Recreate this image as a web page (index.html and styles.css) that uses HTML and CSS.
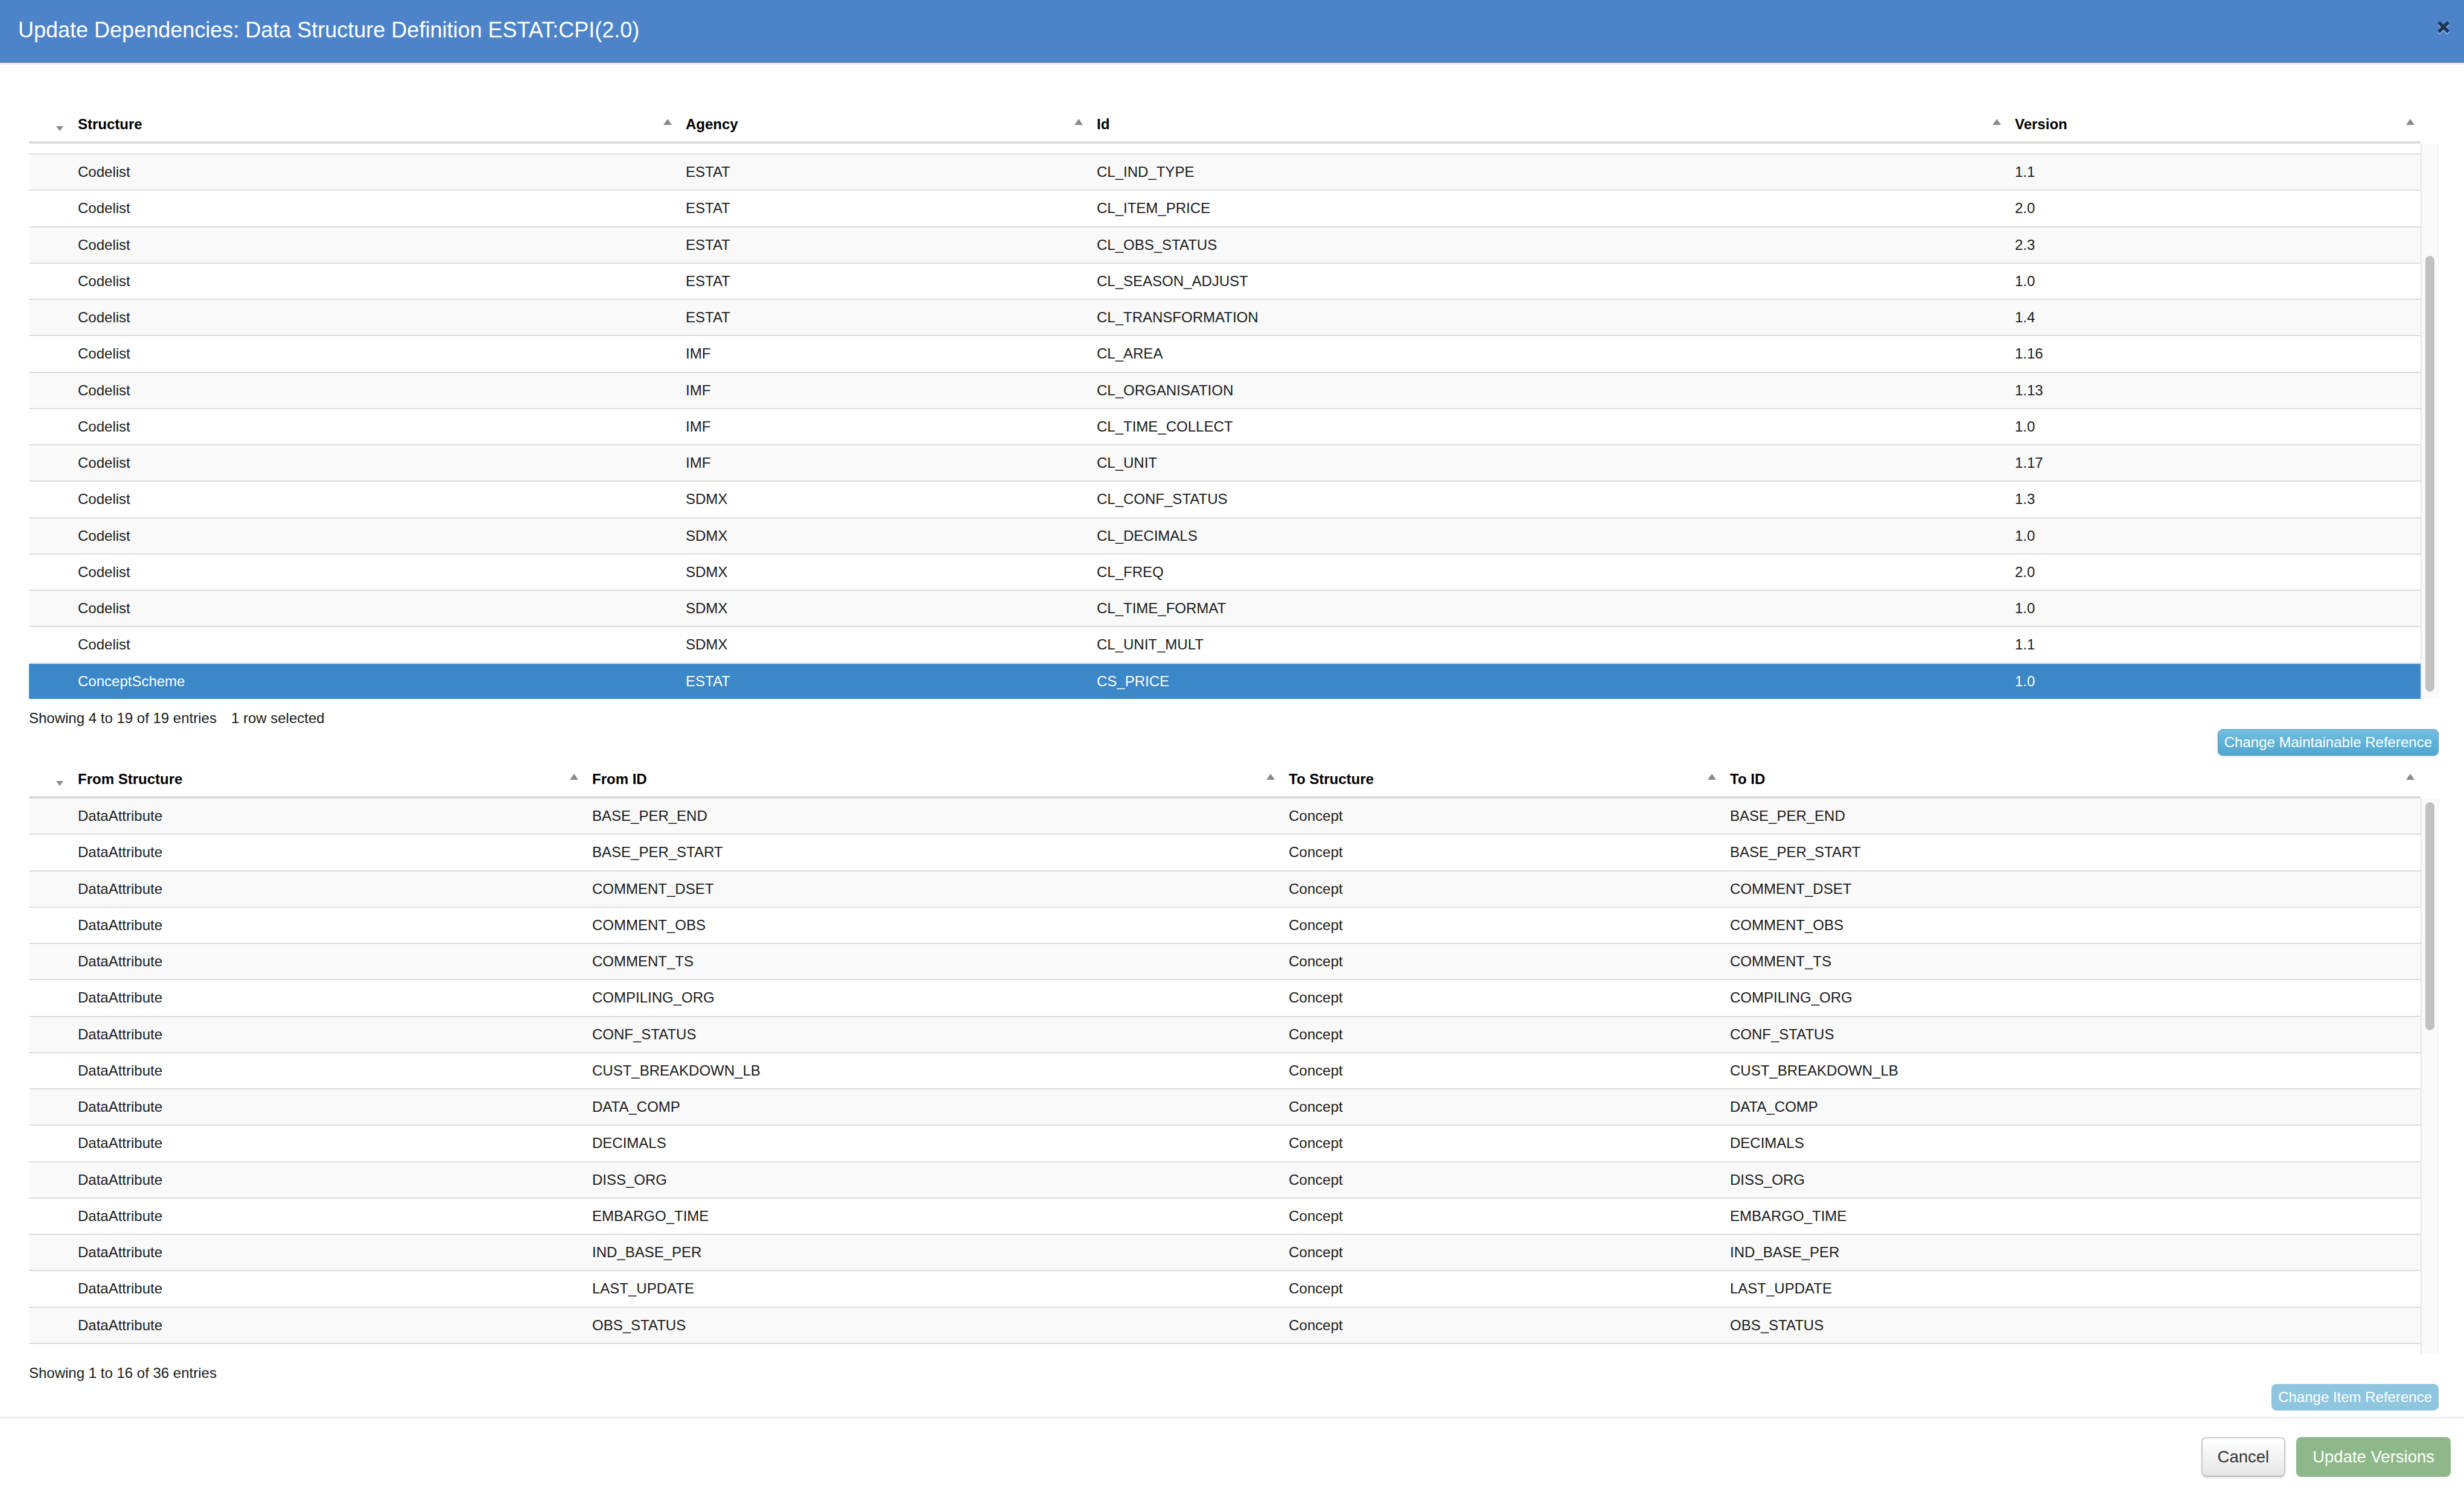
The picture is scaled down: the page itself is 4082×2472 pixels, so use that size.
FILE: index.html
```html
<!DOCTYPE html>
<html lang="en">
<head>
    <meta charset="UTF-8">
    <title>Update Dependencies</title>
    <link rel="stylesheet" href="styles.css">
</head>
<body>
    <div class="modal">
        <!-- Header -->
        <div class="modal-header">
            <h3 class="modal-title">Update Dependencies: Data Structure Definition ESTAT:CPI(2.0)</h3>
            <button class="close" title="Close">
                <svg viewBox="0 0 22 24"><path d="M3 4 L19 20 M19 4 L3 20"/></svg>
            </button>
        </div>

        <div class="modal-body">
            <!-- Maintainable references -->
            <div class="dt-wrap deps">
                <table class="dt-head">
                    <colgroup><col class="c0"><col class="c1"><col class="c2"><col class="c3"><col class="c4"></colgroup>
                    <thead>
                        <tr>
                            <th class="sort-down"></th>
                            <th class="sort-up">Structure</th>
                            <th class="sort-up">Agency</th>
                            <th class="sort-up">Id</th>
                            <th class="sort-up">Version</th>
                        </tr>
                    </thead>
                </table>
                <div class="dt-scroll">
                    <div class="dt-viewport at-end">
                        <table>
                            <colgroup><col class="c0"><col class="c1"><col class="c2"><col class="c3"><col class="c4"></colgroup>
                            <tbody>
                                <tr><td></td><td>Codelist</td><td>ESTAT</td><td>CL_COICOP</td><td>1.0</td></tr>
                                <tr><td></td><td>Codelist</td><td>ESTAT</td><td>CL_CURRENCY</td><td>1.0</td></tr>
                                <tr><td></td><td>Codelist</td><td>ESTAT</td><td>CL_GEO</td><td>1.0</td></tr>
                                <tr><td></td><td>Codelist</td><td>ESTAT</td><td>CL_INDICATOR</td><td>1.0</td></tr>
                                <tr><td></td><td>Codelist</td><td>ESTAT</td><td>CL_IND_TYPE</td><td>1.1</td></tr>
                                <tr><td></td><td>Codelist</td><td>ESTAT</td><td>CL_ITEM_PRICE</td><td>2.0</td></tr>
                                <tr><td></td><td>Codelist</td><td>ESTAT</td><td>CL_OBS_STATUS</td><td>2.3</td></tr>
                                <tr><td></td><td>Codelist</td><td>ESTAT</td><td>CL_SEASON_ADJUST</td><td>1.0</td></tr>
                                <tr><td></td><td>Codelist</td><td>ESTAT</td><td>CL_TRANSFORMATION</td><td>1.4</td></tr>
                                <tr><td></td><td>Codelist</td><td>IMF</td><td>CL_AREA</td><td>1.16</td></tr>
                                <tr><td></td><td>Codelist</td><td>IMF</td><td>CL_ORGANISATION</td><td>1.13</td></tr>
                                <tr><td></td><td>Codelist</td><td>IMF</td><td>CL_TIME_COLLECT</td><td>1.0</td></tr>
                                <tr><td></td><td>Codelist</td><td>IMF</td><td>CL_UNIT</td><td>1.17</td></tr>
                                <tr><td></td><td>Codelist</td><td>SDMX</td><td>CL_CONF_STATUS</td><td>1.3</td></tr>
                                <tr><td></td><td>Codelist</td><td>SDMX</td><td>CL_DECIMALS</td><td>1.0</td></tr>
                                <tr><td></td><td>Codelist</td><td>SDMX</td><td>CL_FREQ</td><td>2.0</td></tr>
                                <tr><td></td><td>Codelist</td><td>SDMX</td><td>CL_TIME_FORMAT</td><td>1.0</td></tr>
                                <tr><td></td><td>Codelist</td><td>SDMX</td><td>CL_UNIT_MULT</td><td>1.1</td></tr>
                                <tr class="selected"><td></td><td>ConceptScheme</td><td>ESTAT</td><td>CS_PRICE</td><td>1.0</td></tr>
                            </tbody>
                        </table>
                    </div>
                    <div class="scrollbar"><div class="thumb" style="top: 186px; height: 722px;"></div></div>
                </div>
                <div class="dt-info">Showing 4 to 19 of 19 entries<span class="select-info">1 row selected</span></div>
                <div class="dt-actions">
                    <button class="btn btn-info">Change Maintainable Reference</button>
                </div>
            </div>

            <!-- Item references -->
            <div class="dt-wrap items">
                <table class="dt-head">
                    <colgroup><col class="c0"><col class="c1"><col class="c2"><col class="c3"><col class="c4"></colgroup>
                    <thead>
                        <tr>
                            <th class="sort-down"></th>
                            <th class="sort-up">From Structure</th>
                            <th class="sort-up">From ID</th>
                            <th class="sort-up">To Structure</th>
                            <th class="sort-up">To ID</th>
                        </tr>
                    </thead>
                </table>
                <div class="dt-scroll">
                    <div class="dt-viewport">
                        <table>
                            <colgroup><col class="c0"><col class="c1"><col class="c2"><col class="c3"><col class="c4"></colgroup>
                            <tbody>
                                <tr><td></td><td>DataAttribute</td><td>BASE_PER_END</td><td>Concept</td><td>BASE_PER_END</td></tr>
                                <tr><td></td><td>DataAttribute</td><td>BASE_PER_START</td><td>Concept</td><td>BASE_PER_START</td></tr>
                                <tr><td></td><td>DataAttribute</td><td>COMMENT_DSET</td><td>Concept</td><td>COMMENT_DSET</td></tr>
                                <tr><td></td><td>DataAttribute</td><td>COMMENT_OBS</td><td>Concept</td><td>COMMENT_OBS</td></tr>
                                <tr><td></td><td>DataAttribute</td><td>COMMENT_TS</td><td>Concept</td><td>COMMENT_TS</td></tr>
                                <tr><td></td><td>DataAttribute</td><td>COMPILING_ORG</td><td>Concept</td><td>COMPILING_ORG</td></tr>
                                <tr><td></td><td>DataAttribute</td><td>CONF_STATUS</td><td>Concept</td><td>CONF_STATUS</td></tr>
                                <tr><td></td><td>DataAttribute</td><td>CUST_BREAKDOWN_LB</td><td>Concept</td><td>CUST_BREAKDOWN_LB</td></tr>
                                <tr><td></td><td>DataAttribute</td><td>DATA_COMP</td><td>Concept</td><td>DATA_COMP</td></tr>
                                <tr><td></td><td>DataAttribute</td><td>DECIMALS</td><td>Concept</td><td>DECIMALS</td></tr>
                                <tr><td></td><td>DataAttribute</td><td>DISS_ORG</td><td>Concept</td><td>DISS_ORG</td></tr>
                                <tr><td></td><td>DataAttribute</td><td>EMBARGO_TIME</td><td>Concept</td><td>EMBARGO_TIME</td></tr>
                                <tr><td></td><td>DataAttribute</td><td>IND_BASE_PER</td><td>Concept</td><td>IND_BASE_PER</td></tr>
                                <tr><td></td><td>DataAttribute</td><td>LAST_UPDATE</td><td>Concept</td><td>LAST_UPDATE</td></tr>
                                <tr><td></td><td>DataAttribute</td><td>OBS_STATUS</td><td>Concept</td><td>OBS_STATUS</td></tr>
                                <tr><td></td><td>DataAttribute</td><td>PUBL_ECB</td><td>Concept</td><td>PUBL_ECB</td></tr>
                                <tr><td></td><td>DataAttribute</td><td>PUBL_MU</td><td>Concept</td><td>PUBL_MU</td></tr>
                                <tr><td></td><td>DataAttribute</td><td>PUBL_PUBLIC</td><td>Concept</td><td>PUBL_PUBLIC</td></tr>
                                <tr><td></td><td>DataAttribute</td><td>TIME_FORMAT</td><td>Concept</td><td>TIME_FORMAT</td></tr>
                                <tr><td></td><td>DataAttribute</td><td>TITLE</td><td>Concept</td><td>TITLE</td></tr>
                                <tr><td></td><td>DataAttribute</td><td>TITLE_COMPL</td><td>Concept</td><td>TITLE_COMPL</td></tr>
                                <tr><td></td><td>DataAttribute</td><td>UNIT</td><td>Concept</td><td>UNIT</td></tr>
                                <tr><td></td><td>DataAttribute</td><td>UNIT_INDEX_BASE</td><td>Concept</td><td>UNIT_INDEX_BASE</td></tr>
                                <tr><td></td><td>DataAttribute</td><td>UNIT_MULT</td><td>Concept</td><td>UNIT_MULT</td></tr>
                                <tr><td></td><td>Dimension</td><td>COUNTERPART_AREA</td><td>Concept</td><td>COUNTERPART_AREA</td></tr>
                                <tr><td></td><td>Dimension</td><td>COUNTRY</td><td>Concept</td><td>COUNTRY</td></tr>
                                <tr><td></td><td>Dimension</td><td>FREQ</td><td>Concept</td><td>FREQ</td></tr>
                                <tr><td></td><td>Dimension</td><td>INDEX_TYPE</td><td>Concept</td><td>INDEX_TYPE</td></tr>
                                <tr><td></td><td>Dimension</td><td>INDICATOR</td><td>Concept</td><td>INDICATOR</td></tr>
                                <tr><td></td><td>Dimension</td><td>ITEM</td><td>Concept</td><td>ITEM</td></tr>
                                <tr><td></td><td>Dimension</td><td>REF_AREA</td><td>Concept</td><td>REF_AREA</td></tr>
                                <tr><td></td><td>Dimension</td><td>SEASONAL_ADJUST</td><td>Concept</td><td>SEASONAL_ADJUST</td></tr>
                                <tr><td></td><td>Dimension</td><td>TRANSFORMATION</td><td>Concept</td><td>TRANSFORMATION</td></tr>
                                <tr><td></td><td>Dimension</td><td>UNIT_MEASURE</td><td>Concept</td><td>UNIT_MEASURE</td></tr>
                                <tr><td></td><td>PrimaryMeasure</td><td>OBS_VALUE</td><td>Concept</td><td>OBS_VALUE</td></tr>
                                <tr><td></td><td>TimeDimension</td><td>TIME_PERIOD</td><td>Concept</td><td>TIME_PERIOD</td></tr>
                            </tbody>
                        </table>
                    </div>
                    <div class="scrollbar"><div class="thumb" style="top: 6px; height: 378px;"></div></div>
                </div>
                <div class="dt-info">Showing 1 to 16 of 36 entries</div>
                <div class="dt-actions">
                    <button class="btn btn-info" disabled>Change Item Reference</button>
                </div>
            </div>
        </div>

        <!-- Footer -->
        <div class="modal-footer">
            <button class="btn btn-lg btn-default">Cancel</button>
            <button class="btn btn-lg btn-success" disabled>Update Versions</button>
        </div>
    </div>

    <script src="script.js"></script>
</body>
</html>
```

FILE: styles.css
```css
* { box-sizing: border-box; }
body { margin: 0; font-family: "Liberation Sans", Arial, Helvetica, sans-serif; font-size: 24px; color: #1a1a1a; background: #fff; }

/* Header */
.modal-header { display: flex; justify-content: space-between; align-items: flex-start; height: 107px; padding: 28px 23px 0 30px; background: #4d84c9; border-bottom: 3px solid #e9e9e9; }
.modal-title { margin: 0; font-size: 36px; font-weight: normal; line-height: 44px; color: #fff; }
.close { margin-top: 5px; padding: 0; border: 0; background: none; cursor: pointer; line-height: 0; }
.close svg { display: block; width: 22px; height: 24px; filter: drop-shadow(0 2px 0 rgba(255,255,255,0.45)); }
.close path { stroke: #1e3553; stroke-width: 5.5; fill: none; }

/* Body */
.modal-body { padding: 71px 42px 11px 48px; }
.dt-wrap + .dt-wrap { margin-top: 11px; }

/* Tables */
.dt-wrap table { width: 3962px; table-layout: fixed; border-collapse: separate; border-spacing: 0; }
th, td { text-align: left; white-space: nowrap; line-height: 28px; }
th { position: relative; padding: 14px 13px 14px; font-weight: bold; color: #000; border-bottom: 4px solid #dcdcdc; }
td { padding: 15px 13px 15.25px; border-top: 2px solid #dddddd; }
tbody tr:first-child td { border-top: 0; }
tbody tr:nth-child(odd) td { background: #f9f9f9; }
tbody tr.selected td { background: #3b87c8; color: #fff; }

/* Sort arrows */
th.sort-up::after, th.sort-down::after { content: ""; position: absolute; right: 10px; border-left: 7px solid transparent; border-right: 7px solid transparent; }
th.sort-up::after { top: 19px; border-bottom: 10px solid #8a8a8a; }
th.sort-down::after { top: 31px; right: 11px; border-left-width: 6.5px; border-right-width: 6.5px; border-top: 8px solid #8a8a8a; }

/* Column widths */
.dt-wrap .c0 { width: 68px; }
.deps .c1 { width: 1007px; }
.deps .c2 { width: 681px; }
.deps .c3 { width: 1521px; }
.deps .c4 { width: 685px; }
.items .c1 { width: 852px; }
.items .c2 { width: 1154px; }
.items .c3 { width: 731px; }
.items .c4 { width: 1157px; }

/* Scroll area */
.dt-scroll { display: flex; height: 920px; }
.dt-viewport { width: 3962px; overflow: hidden; }
.scrollbar { position: relative; width: 30px; background: #fafafa; border-left: 2px solid #e6e6e6; border-right: 1px solid #ededed; }
.scrollbar .thumb { position: absolute; left: 6px; right: 6px; background: #c1c1c1; border-radius: 8px; }

/* Info + actions */
.dt-info { padding-top: 15px; line-height: 34px; color: #1a1a1a; }
.select-info { margin-left: 24px; }
.dt-actions { margin-top: 1px; text-align: right; }

/* Buttons */
.btn { display: inline-block; font-family: inherit; font-size: 24px; line-height: 28px; padding: 7px 10px; border: 1px solid transparent; border-radius: 8px; color: #fff; cursor: pointer; }
.btn:disabled { cursor: default; box-shadow: none; }
.btn-info { background: linear-gradient(#73bfe0, #4fa6cf); border-color: #4a9ec7; box-shadow: 0 2px 3px rgba(0,0,0,0.12); }
.btn-info:disabled { background: #8fc5de; border-color: #8fc5de; }
.btn-lg { font-size: 27.5px; line-height: 36px; padding: 13px 25px; border-width: 2px; }
.btn-default { color: #333; background: linear-gradient(#ffffff, #e6e6e6); border-color: #cccccc #cccccc #b8b8b8; box-shadow: 0 2px 4px rgba(0,0,0,0.1); }
.btn-success:disabled { background: #8fb88a; border-color: #8fb88a; }

/* Footer */
.modal-footer { display: flex; justify-content: flex-end; gap: 18px; padding: 31px 22px 25px; border-top: 2px solid #e5e5e5; }
```

FILE: script.js
```js
// the first list opens scrolled to its end, so the selected row is in view
document.querySelectorAll('.dt-viewport.at-end').forEach(function (el) {
    el.scrollTop = el.scrollHeight;
});
```
